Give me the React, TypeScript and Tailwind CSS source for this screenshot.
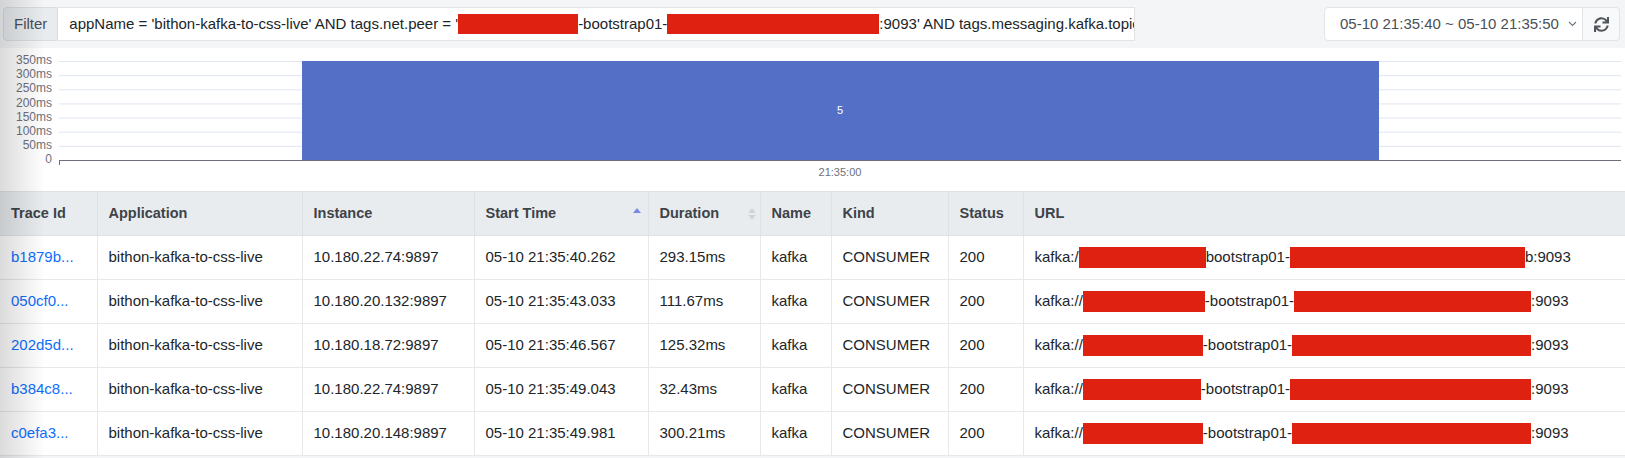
import { FaSync } from 'react-icons/fa';

const traces = [
    { id: 'b1879b...', instance: '10.180.22.74:9897', start: '05-10 21:35:40.262', duration: '293.15ms', pre: 'kafka:/', r1: 'w-[127px]', mid: 'bootstrap01-', r2: 'w-[235px]', post: 'b:9093' },
    { id: '050cf0...', instance: '10.180.20.132:9897', start: '05-10 21:35:43.033', duration: '111.67ms', pre: 'kafka://', r1: 'w-[122px]', mid: '-bootstrap01-', r2: 'w-[237px]', post: ':9093' },
    { id: '202d5d...', instance: '10.180.18.72:9897', start: '05-10 21:35:46.567', duration: '125.32ms', pre: 'kafka://', r1: 'w-[120px]', mid: '-bootstrap01-', r2: 'w-[239px]', post: ':9093' },
    { id: 'b384c8...', instance: '10.180.22.74:9897', start: '05-10 21:35:49.043', duration: '32.43ms', pre: 'kafka://', r1: 'w-[118px]', mid: '-bootstrap01-', r2: 'w-[241px]', post: ':9093' },
    { id: 'c0efa3...', instance: '10.180.20.148:9897', start: '05-10 21:35:49.981', duration: '300.21ms', pre: 'kafka://', r1: 'w-[120px]', mid: '-bootstrap01-', r2: 'w-[239px]', post: ':9093' },
];

const yTicks = [350, 300, 250, 200, 150, 100, 50, 0];

function SortIcon({ active }: { active?: boolean }) {
    return (
        <svg width="8" height="14" viewBox="0 0 8 14" className="shrink-0">
            <polygon points="0,6 4,1 8,6" fill={active ? '#7d88e2' : '#d0d3d8'} />
            {!active && <polygon points="0,8 4,13 8,8" fill="#d0d3d8" />}
        </svg>
    );
}

function Chart() {
    const yOf = (v: number) => 112 - v * (99 / 350);
    return (
        <svg viewBox="0 0 1625 143" className="block h-[143px] w-full">
            {yTicks.map((v) => (
                <g key={v}>
                    {v > 0 && <line x1="59" x2="1621" y1={yOf(v) + 0.5} y2={yOf(v) + 0.5} stroke="#e0e6f1" strokeWidth="1" />}
                    <text x="52" y={yOf(v)} textAnchor="end" dominantBaseline="middle" fontSize="12" fill="#6e7079" fontFamily="Liberation Sans, Arial, sans-serif">
                        {v === 0 ? '0' : `${v}ms`}
                    </text>
                </g>
            ))}
            <rect x="302" y="13" width="1077" height="99" fill="#5470c6" />
            <text x="840" y="63" textAnchor="middle" dominantBaseline="middle" fontSize="11" fill="#ffffff" fontFamily="Liberation Sans, Arial, sans-serif">5</text>
            <line x1="59" x2="1621" y1="112.5" y2="112.5" stroke="#6e7079" strokeWidth="1" />
            <line x1="59.5" x2="59.5" y1="112" y2="117" stroke="#6e7079" strokeWidth="1" />
            <text x="840" y="125" textAnchor="middle" dominantBaseline="middle" fontSize="11" fill="#6e7079" fontFamily="Liberation Sans, Arial, sans-serif">21:35:00</text>
        </svg>
    );
}

export default function App() {
    return (
        <div className="relative h-[458px] w-full overflow-hidden bg-[#f4f5f7] font-['Liberation_Sans',Arial,sans-serif]">
            {/* toolbar */}
            <div className="flex h-[48px] items-center pl-[3px] pr-[5px]">
                <div className="flex h-[34px] w-[1132px]">
                    <div className="flex items-center rounded-l-[4px] border border-[#d9dde2] bg-[#e9ecef] px-[10px] text-[15px] text-[#495057]">
                        Filter
                    </div>
                    <div className="flex min-w-0 flex-1 items-center overflow-hidden whitespace-nowrap border border-l-0 border-[#e1e4e8] bg-white pl-[11px] text-[15px] text-[#212529]">
                        <span>appName = 'bithon-kafka-to-css-live' AND tags.net.peer = '</span>
                        <span className="inline-block h-[20px] w-[120px] shrink-0 bg-[#de2110]" />
                        <span>-bootstrap01-</span>
                        <span className="inline-block h-[20px] w-[212px] shrink-0 bg-[#de2110]" />
                        <span>:9093' AND tags.messaging.kafka.topic</span>
                    </div>
                </div>
                <div className="ml-auto flex h-[34px]">
                    <div className="flex w-[259px] items-center justify-between rounded-l-[4px] border border-[#e1e4e8] bg-white pl-[15px] pr-[5px] text-[15px] text-[#495057]">
                        <span>05-10 21:35:40 ~ 05-10 21:35:50</span>
                        <svg width="9" height="6" viewBox="0 0 9 6">
                            <polyline points="1,1 4.5,4.5 8,1" fill="none" stroke="#6c757d" strokeWidth="1.1" />
                        </svg>
                    </div>
                    <button className="flex w-[37px] items-center justify-center rounded-r-[4px] border border-l-0 border-[#e1e4e8] bg-[#f8f9fa] text-[#50555b]">
                        <FaSync size={15} />
                    </button>
                </div>
            </div>

            {/* chart + table */}
            <div className="bg-white">
                <Chart />
                <table className="w-full table-fixed border-collapse text-left text-[15px] text-[#212529]">
                    <colgroup>
                        <col className="w-[97px]" />
                        <col className="w-[205px]" />
                        <col className="w-[172px]" />
                        <col className="w-[174px]" />
                        <col className="w-[112px]" />
                        <col className="w-[71px]" />
                        <col className="w-[117px]" />
                        <col className="w-[75px]" />
                        <col />
                    </colgroup>
                    <thead>
                        <tr className="h-[44px] border-y border-[#dee2e6] bg-[#e9ecef] text-[14.5px] font-bold text-[#3d4348]">
                            <th className="border-r border-[#dee2e6] px-[11px]">Trace Id</th>
                            <th className="border-r border-[#dee2e6] px-[11px]">Application</th>
                            <th className="border-r border-[#dee2e6] px-[11px]">Instance</th>
                            <th className="border-r border-[#dee2e6] pl-[11px] pr-[7px]">
                                <div className="flex items-center justify-between">
                                    <span>Start Time</span>
                                    <SortIcon active />
                                </div>
                            </th>
                            <th className="border-r border-[#dee2e6] pl-[11px] pr-[4px]">
                                <div className="flex items-center justify-between">
                                    <span>Duration</span>
                                    <SortIcon />
                                </div>
                            </th>
                            <th className="border-r border-[#dee2e6] px-[11px]">Name</th>
                            <th className="border-r border-[#dee2e6] px-[11px]">Kind</th>
                            <th className="border-r border-[#dee2e6] px-[11px]">Status</th>
                            <th className="px-[11px]">URL</th>
                        </tr>
                    </thead>
                    <tbody>
                        {traces.map((t) => (
                            <tr key={t.id} className="h-[44px] border-b border-[#e6e8eb]">
                                <td className="border-r border-[#e6e8eb] px-[11px]">
                                    <a href="#" className="text-[#0d6efd]">{t.id}</a>
                                </td>
                                <td className="border-r border-[#e6e8eb] px-[11px]">bithon-kafka-to-css-live</td>
                                <td className="border-r border-[#e6e8eb] px-[11px]">{t.instance}</td>
                                <td className="border-r border-[#e6e8eb] px-[11px]">{t.start}</td>
                                <td className="border-r border-[#e6e8eb] px-[11px]">{t.duration}</td>
                                <td className="border-r border-[#e6e8eb] px-[11px]">kafka</td>
                                <td className="border-r border-[#e6e8eb] px-[11px]">CONSUMER</td>
                                <td className="border-r border-[#e6e8eb] px-[11px]">200</td>
                                <td className="px-[11px]">
                                    <div className="flex items-center whitespace-nowrap">
                                        <span>{t.pre}</span>
                                        <span className={`inline-block h-[21px] shrink-0 bg-[#de2110] ${t.r1}`} />
                                        <span>{t.mid}</span>
                                        <span className={`inline-block h-[21px] shrink-0 bg-[#de2110] ${t.r2}`} />
                                        <span>{t.post}</span>
                                    </div>
                                </td>
                            </tr>
                        ))}
                    </tbody>
                </table>
            </div>

            {/* shadow falling on the left edge */}
            <div className="pointer-events-none absolute inset-y-0 left-0 w-[45px] bg-[linear-gradient(to_right,rgba(0,0,0,0.14),rgba(0,0,0,0))]" />
        </div>
    );
}
